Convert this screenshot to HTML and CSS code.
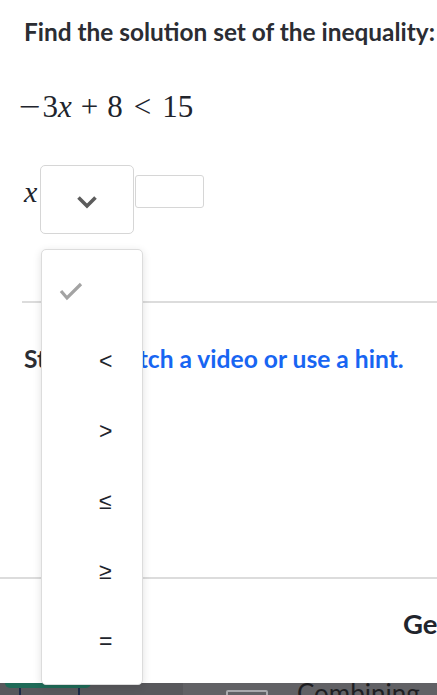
FILE: index.html
```html
<!DOCTYPE html>
<html lang="en">
<head>
<meta charset="utf-8">
<link rel="stylesheet" href="styles.css">
</head>
<body>
<div class="page">
  <div class="problem">
    <h1 class="title">Find the solution set of the inequality:</h1>
    <div class="math"><span class="op">−</span>3<i>x</i><span class="bin">+</span>8<span class="rel">&lt;</span>15</div>
    <div class="answer">
      <i class="var">x</i>
      <div class="select">
        <svg class="chev" width="22" height="14" viewBox="0 0 22 14"><polyline points="2.5,2.5 11,11 19.5,2.5" fill="none" stroke="#5c5c5c" stroke-width="3.6"/></svg>
      </div>
      <div class="input"></div>
    </div>
  </div>
  <hr class="rule rule-inset">
  <p class="hint">Stuck? <span class="link">Watch a video or use a hint.</span></p>
  <hr class="rule rule-full">
  <div class="footer"><span class="gethelp">Get help</span></div>
  <div class="bar">
    <div class="seg-left">
      <div class="green"></div>
      <div class="lines"><span class="ln"></span><span class="ln"></span></div>
    </div>
    <div class="seg-right">
      <div class="box"></div>
      <span class="combining">Combining</span>
    </div>
  </div>

  <ul class="menu">
    <li class="item"><svg class="check" width="24" height="20" viewBox="0 0 24 20"><polyline points="2,9 8,16 22,2" fill="none" stroke="#a3a3a3" stroke-width="3.2"/></svg></li>
    <li class="item"><span class="sym">&lt;</span></li>
    <li class="item"><span class="sym">&gt;</span></li>
    <li class="item"><span class="sym">≤</span></li>
    <li class="item"><span class="sym">≥</span></li>
    <li class="item"><span class="sym">=</span></li>
  </ul>
</div>
</body>
</html>
```

FILE: styles.css
```css
html, body {
  margin: 0;
  padding: 0;
  background: #fff;
}
body {
  width: 437px;
  height: 695px;
  overflow: hidden;
  font-family: Lato, "Noto Sans", sans-serif;
  color: #21242c;
}
.page {
  position: relative;
  height: 695px;
}
.problem {
  padding-left: 24px;
}
.title {
  margin: 0;
  padding-top: 17px;
  font-size: 24.4px;
  line-height: 30px;
  font-weight: 700;
  color: #2b2d33;
  white-space: nowrap;
}
.math {
  margin-top: 42px;
  margin-left: -3px;
  font-family: "Liberation Serif", "Times New Roman", serif;
  font-size: 31px;
  line-height: 36px;
  color: #21242c;
  white-space: nowrap;
}
.math i { font-style: italic; }
.math .op { display: inline-block; transform: scaleX(1.25); margin-right: 4px; }
.math .bin { margin: 0 9px; }
.math .rel { margin: 0 11px; }
.answer {
  margin-top: 40px;
  display: flex;
  align-items: flex-start;
  height: 69px;
}
.var {
  font-family: "Liberation Serif", "Times New Roman", serif;
  font-style: italic;
  font-size: 30px;
  line-height: 30px;
  width: 16px;
  margin-top: 12px;
  color: #21242c;
}
.select {
  box-sizing: border-box;
  width: 94px;
  height: 69px;
  border: 1.5px solid #d6d6d6;
  border-radius: 5px;
  display: flex;
  align-items: center;
  justify-content: center;
  padding-top: 4px;
}
.chev { display: block; }
.input {
  box-sizing: border-box;
  width: 69px;
  height: 33px;
  margin-left: 1px;
  margin-top: 10px;
  border: 1.5px solid #d6d6d6;
  border-radius: 3px;
}
.rule {
  border: 0;
  height: 2px;
  background: #dcdcdc;
  margin: 0;
}
.rule-inset {
  margin-top: 67px;
  margin-left: 22px;
}
.hint {
  margin: 41px 0 0 24px;
  font-size: 24.6px;
  line-height: 30px;
  font-weight: 700;
  color: #2b2d33;
  white-space: nowrap;
}
.link { color: #1865f2; }
.rule-full {
  margin-top: 203px;
}
.footer {
  height: 104px;
  box-sizing: border-box;
  padding: 30px 0 0 403px;
  white-space: nowrap;
  overflow: hidden;
}
.gethelp {
  font-size: 27.5px;
  line-height: 30px;
  font-weight: 700;
  color: #21242c;
}
.bar {
  display: flex;
  height: 12px;
  overflow: hidden;
}
.seg-left {
  width: 183px;
  background: #58585c;
  display: flex;
  flex-direction: column;
}
.green {
  height: 5px;
  margin: 0 92px 0 5px;
  background: #1f6b58;
  border-radius: 0 0 16px 16px;
}
.lines {
  display: flex;
  gap: 57px;
  padding-left: 19px;
  flex: 1;
}
.ln {
  width: 2px;
  background: #1d2a48;
}
.seg-right {
  flex: 1;
  background: #616165;
  display: flex;
  align-items: flex-start;
  padding-left: 43px;
}
.box {
  box-sizing: border-box;
  width: 42px;
  height: 12px;
  margin-top: 7px;
  border: 2px solid #a9a9ad;
  border-radius: 2px;
}
.combining {
  margin-left: 29px;
  margin-top: -5px;
  font-size: 26px;
  line-height: 30px;
  color: #1e1e22;
}
.menu {
  position: absolute;
  top: 249px;
  left: 41px;
  width: 102px;
  height: 436px;
  box-sizing: border-box;
  margin: 0;
  padding: 6px 0 0 0;
  list-style: none;
  background: #fff;
  border: 1px solid #dcdcdc;
  border-radius: 5px;
  box-shadow: 0 2px 8px rgba(0,0,0,0.12);
}
.item {
  height: 70px;
  display: flex;
  align-items: center;
  padding-left: 17px;
}
.check { display: block; margin-top: 2px; }
.sym {
  margin-left: 40px;
  font-family: "Liberation Sans", Arial, sans-serif;
  font-size: 23px;
  color: #21242c;
}
```
